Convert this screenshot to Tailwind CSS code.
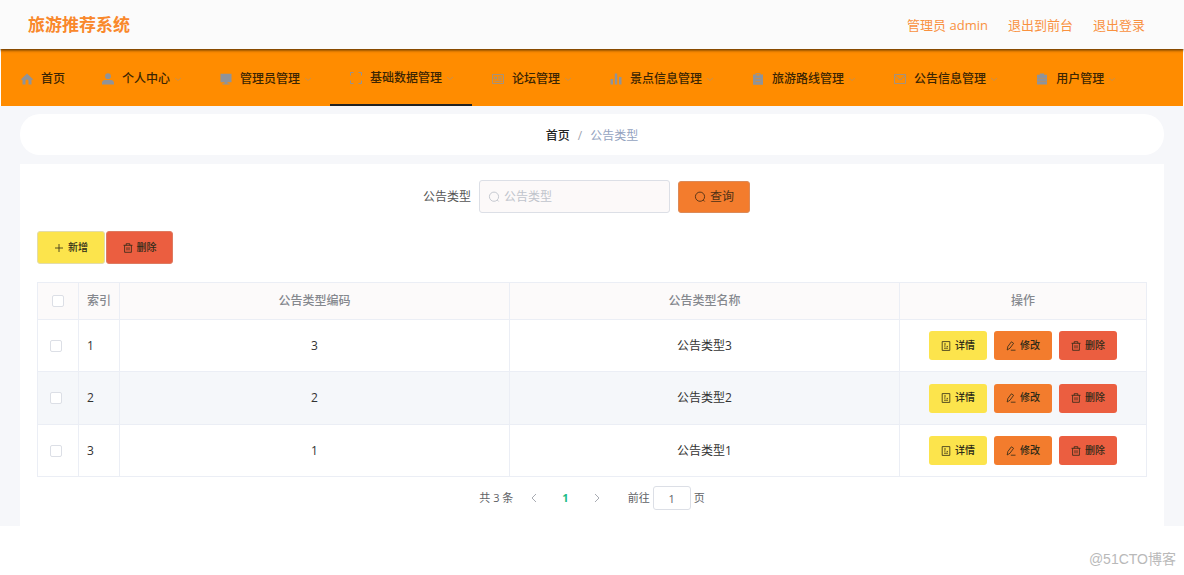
<!DOCTYPE html>
<html lang="zh-CN">
<head>
<meta charset="utf-8">
<meta name="viewport" content="width=device-width, initial-scale=1">
<title>旅游推荐系统</title>
<script src="https://cdn.jsdelivr.net/npm/@tailwindcss/browser@4"></script>
</head>
<body class="bg-white font-['Open_Sans','Noto_Sans_CJK_SC',sans-serif] text-xs text-[#333]">

<svg class="hidden" aria-hidden="true">
  <symbol id="down" viewBox="0 0 8 8"><path d="M1 3l3 2.5L7 3" fill="none" stroke="currentColor" stroke-width="1"/></symbol>
  <symbol id="search" viewBox="0 0 12 12" fill="none" stroke="currentColor" stroke-width=".9"><circle cx="6" cy="5.7" r="4.6"/><path d="M9.200 9l1.500 1.500"/></symbol>
  <symbol id="trash" viewBox="0 0 10 10" fill="none" stroke="currentColor" stroke-width=".8"><path d="M.5 2.3h9M3.2 2.3V.7h3.6v1.6M1.6 2.3v7h6.8v-7M4 4.2v3.2M6 4.2v3.2"/></symbol>
  <symbol id="doc" viewBox="0 0 10 10" fill="none" stroke="currentColor" stroke-width=".8"><path d="M1.2.6h7.6v8.8H1.2zM3 3h2M3 5h1.6M5.6 5.4H7M3 7.2h4"/></symbol>
  <symbol id="edit" viewBox="0 0 10 10" fill="none" stroke="currentColor" stroke-width=".8"><path d="M1.200 9l.6-3.400L5.400.8l2.200 1.500L4 7.200zM4.800 9.200h4.700"/></symbol>
</svg>

<header class="relative z-10 flex h-[49px] items-center justify-between bg-[#fbfbfb] pr-[39px] pl-7 shadow-[0_1px_3px_rgba(0,0,0,0.75)]">
  <h1 class="text-[17px] leading-6 font-bold text-[#f9882b]">旅游推荐系统</h1>
  <div class="flex items-center gap-5 text-[13px] leading-5 text-[#f9913f]">
    <span>管理员 admin</span>
    <a href="#">退出到前台</a>
    <a href="#">退出登录</a>
  </div>
</header>

<nav class="mx-px flex h-[57px] bg-[#ff8c00] font-medium text-[#3b2503] [&>a]:pt-0.5">
  <a href="#" class="flex items-center gap-2 pr-[17px] pl-5">
    <svg class="size-3 text-[#909399]" viewBox="0 0 12 12" fill="currentColor"><path d="M6 .5L0 6.3l.8.9.7-.6V11.5h3V8a1.5 1.5 0 013 0v3.5h3V6.6l.7.6.8-.9z"/></svg>首页</a>
  <a href="#" class="flex items-center pr-[18px] pl-5">
    <svg class="mr-2 size-3 text-[#909399]" viewBox="0 0 12 12" fill="currentColor"><circle cx="6" cy="3.2" r="2.9"/><path d="M0 11.6V10c0-2 1.4-3 3-3h6c1.600 0 3 1 3 3v1.600z"/></svg>个人中心
    <svg class="ml-1 size-2 text-[#909399]/50"><use href="#down"/></svg></a>
  <a href="#" class="flex items-center pr-[18px] pl-5">
    <svg class="mr-2 size-3 text-[#909399]" viewBox="0 0 12 12" fill="currentColor"><path d="M.5.8h11v8.400h-4V10.500h2v1H2.500v-1h2V9.200h-4z"/></svg>管理员管理
    <svg class="ml-1 size-2 text-[#909399]/50"><use href="#down"/></svg></a>
  <a href="#" class="flex items-center border-b-2 border-[#222] pr-[18px] pl-5" aria-current="page">
    <svg class="mr-2 size-3 text-[#909399]" viewBox="0 0 12 12" fill="none" stroke="currentColor"><path d="M.5 3.500v-3h3M8.500.5h3v3M11.500 8.500v3h-3M3.500 11.500h-3v-3"/></svg>基础数据管理
    <svg class="ml-1 size-2 text-[#909399]/50"><use href="#down"/></svg></a>
  <a href="#" class="flex items-center pr-[18px] pl-5">
    <svg class="mr-2 size-3 text-[#909399]/80" viewBox="0 0 12 12" fill="none" stroke="currentColor"><path d="M.5 1.500h11v9H.5zM2.500 4h2v2h-2zM6 4h4M6 6h4M2.500 8.300H10"/></svg>论坛管理
    <svg class="ml-1 size-2 text-[#909399]/50"><use href="#down"/></svg></a>
  <a href="#" class="flex items-center pr-[18px] pl-5">
    <svg class="mr-2 size-3 text-[#909399]" viewBox="0 0 12 12" fill="currentColor"><path d="M.5 6H3v5.500H.5zM4.800.5h2.400v11H4.800zM9 4h2.500v7.500H9z"/></svg>景点信息管理
    <svg class="ml-1 size-2 text-[#909399]/50"><use href="#down"/></svg></a>
  <a href="#" class="flex items-center pr-[18px] pl-5">
    <svg class="mr-2 size-3 text-[#909399]" viewBox="0 0 12 12" fill="currentColor" fill-rule="evenodd"><path d="M1 1.500h2.500V.3h5v1.200H11v10.200H1zM4.500 1.300v1.200h3V1.300zM3.500 5v.6h5V5zM3.500 8v.6h5V8z"/></svg>旅游路线管理
    <svg class="ml-1 size-2 text-[#909399]/50"><use href="#down"/></svg></a>
  <a href="#" class="flex items-center pr-[18px] pl-5">
    <svg class="mr-2 size-3 text-[#909399]/90" viewBox="0 0 12 12" fill="none" stroke="currentColor" stroke-width=".9"><path d="M.5 1.500h11v9H.5zM.5 2.500L6 7l5.500-4.500"/></svg>公告信息管理
    <svg class="ml-1 size-2 text-[#909399]/50"><use href="#down"/></svg></a>
  <a href="#" class="flex items-center pr-[18px] pl-5">
    <svg class="mr-2 size-3 text-[#909399]" viewBox="0 0 12 12" fill="currentColor"><path d="M1 1.800h2.800V.6h4.400v1.200H11v3.400H1zM1 5.600h10v2.800H1zM1 8.800h10v2.800H1z"/></svg>用户管理
    <svg class="ml-1 size-2 text-[#909399]/50"><use href="#down"/></svg></a>
</nav>

<main class="bg-[#f6f7fa] px-5 pt-2">
  <nav aria-label="面包屑" class="flex h-[41px] items-center justify-center gap-2 rounded-[20px] bg-white pt-0.5">
    <a href="#" class="font-medium text-[#222]">首页</a>
    <span class="text-[#a0a5b0]">/</span>
    <span class="text-[#94a3c0]">公告类型</span>
  </nav>

  <section class="mt-[9px] bg-white px-[17px] pt-4 pb-4">
    <form class="mr-[11px] flex items-center justify-center">
      <label for="type" class="mr-2 text-[#555]">公告类型</label>
      <div class="mr-2 flex h-[33px] w-[191px] items-center gap-1 rounded-[3px] border border-[#dcdfe6] bg-[#fcf9f9] px-2">
        <svg class="size-3 shrink-0 text-[#c0c4cc]"><use href="#search"/></svg>
        <input id="type" type="text" placeholder="公告类型" class="w-full min-w-0 bg-transparent outline-none placeholder:text-[#c0c4cc]">
      </div>
      <button type="button" class="flex h-8 w-[72px] items-center justify-center gap-1 rounded-[3px] border border-[#dc8a58] bg-[#f37c2d] text-[#4e3015]"><svg class="size-3"><use href="#search"/></svg>查询</button>
    </form>

    <div class="mt-[18px] flex gap-px text-[10px] font-medium text-[#2d2a18]">
      <button type="button" class="flex h-[33px] w-[68px] items-center justify-center gap-1 rounded-[3px] border border-[#e3dcaa] bg-[#fce44c]"><svg class="size-2.5" viewBox="0 0 10 10" stroke="currentColor" fill="none"><path d="M5 1v8M1 5h8" stroke-width=".8"/></svg>新增</button>
      <button type="button" class="flex h-[33px] w-[67px] items-center justify-center gap-1 rounded-[3px] border border-[#de7a60] bg-[#eb5e40]"><svg class="size-2.5"><use href="#trash"/></svg>删除</button>
    </div>

    <table class="mt-[18px] w-full table-fixed border-collapse text-center [&_td]:border [&_td]:border-[#ebeef5] [&_th]:border [&_th]:border-[#ebeef5]">
      <colgroup><col class="w-[41px]"><col class="w-[41px]"><col><col><col class="w-[247px]"></colgroup>
      <thead>
        <tr class="h-[37px] bg-[#fcfafa] text-[#85888e] [&>th]:font-medium">
          <th><input type="checkbox" aria-label="全选" class="block mx-auto size-3 appearance-none rounded-[2px] border border-[#dcdfe6] bg-white"></th>
          <th>索引</th><th>公告类型编码</th><th>公告类型名称</th><th>操作</th>
        </tr>
      </thead>
      <tbody>
        <tr class="h-[52px]">
          <td class="pr-1"><input type="checkbox" aria-label="选择第1行" class="block mx-auto size-3 appearance-none rounded-[2px] border border-[#dcdfe6] bg-white"></td>
          <td class="pl-2 text-left">1</td><td>3</td><td>公告类型3</td>
          <td><div class="flex justify-center gap-[7px] text-[10px] font-medium text-[#2d2a18] [&>button]:flex [&>button]:h-[29px] [&>button]:w-[58px] [&>button]:items-center [&>button]:justify-center [&>button]:gap-1 [&>button]:rounded-[3px]">
            <button type="button" class="bg-[#fce44c]"><svg class="size-2.5"><use href="#doc"/></svg>详情</button>
            <button type="button" class="bg-[#f37c2d]"><svg class="size-2.5"><use href="#edit"/></svg>修改</button>
            <button type="button" class="bg-[#eb5e40]"><svg class="size-2.5"><use href="#trash"/></svg>删除</button></div></td>
        </tr>
        <tr class="h-[53px] bg-[#f5f7fa]">
          <td class="pr-1"><input type="checkbox" aria-label="选择第2行" class="block mx-auto size-3 appearance-none rounded-[2px] border border-[#dcdfe6] bg-white"></td>
          <td class="pl-2 text-left">2</td><td>2</td><td>公告类型2</td>
          <td><div class="flex justify-center gap-[7px] text-[10px] font-medium text-[#2d2a18] [&>button]:flex [&>button]:h-[29px] [&>button]:w-[58px] [&>button]:items-center [&>button]:justify-center [&>button]:gap-1 [&>button]:rounded-[3px]">
            <button type="button" class="bg-[#fce44c]"><svg class="size-2.5"><use href="#doc"/></svg>详情</button>
            <button type="button" class="bg-[#f37c2d]"><svg class="size-2.5"><use href="#edit"/></svg>修改</button>
            <button type="button" class="bg-[#eb5e40]"><svg class="size-2.5"><use href="#trash"/></svg>删除</button></div></td>
        </tr>
        <tr class="h-[52px]">
          <td class="pr-1"><input type="checkbox" aria-label="选择第3行" class="block mx-auto size-3 appearance-none rounded-[2px] border border-[#dcdfe6] bg-white"></td>
          <td class="pl-2 text-left">3</td><td>1</td><td>公告类型1</td>
          <td><div class="flex justify-center gap-[7px] text-[10px] font-medium text-[#2d2a18] [&>button]:flex [&>button]:h-[29px] [&>button]:w-[58px] [&>button]:items-center [&>button]:justify-center [&>button]:gap-1 [&>button]:rounded-[3px]">
            <button type="button" class="bg-[#fce44c]"><svg class="size-2.5"><use href="#doc"/></svg>详情</button>
            <button type="button" class="bg-[#f37c2d]"><svg class="size-2.5"><use href="#edit"/></svg>修改</button>
            <button type="button" class="bg-[#eb5e40]"><svg class="size-2.5"><use href="#trash"/></svg>删除</button></div></td>
        </tr>
      </tbody>
    </table>

    <div class="mt-[9px] flex items-center justify-center text-[11px] text-[#606266]">
      <span>共 3 条</span>
      <button type="button" aria-label="上一页" class="ml-4 text-[#a8abb2]"><svg class="size-2.5" viewBox="0 0 10 10" fill="none" stroke="currentColor"><path d="M7 1L3 5l4 4"/></svg></button>
      <button type="button" class="ml-[23px] font-bold text-[#1abc85]" aria-current="page">1</button>
      <button type="button" aria-label="下一页" class="ml-[23px] text-[#a8abb2]"><svg class="size-2.5" viewBox="0 0 10 10" fill="none" stroke="currentColor"><path d="M3 1l4 4-4 4"/></svg></button>
      <label for="page" class="ml-[26px]">前往</label>
      <input id="page" type="text" value="1" class="mx-[3px] h-6 w-[38px] rounded-[3px] border border-[#dcdfe6] bg-white text-center">
      <span>页</span>
    </div>
  </section>
</main>

<footer class="flex justify-end pt-[23px] pr-2 font-['Liberation_Sans','Noto_Sans_CJK_SC',sans-serif] text-[14px] leading-5 text-[#b9b9b9]">@51CTO博客</footer>
</body>
</html>
